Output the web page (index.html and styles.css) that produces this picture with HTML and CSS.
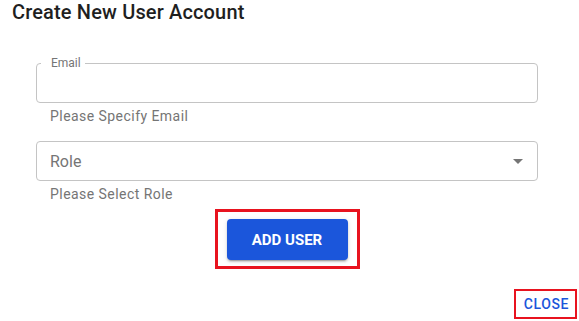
FILE: index.html
```html
<!DOCTYPE html>
<html lang="en">
<head>
  <title>Create New User Account</title>
  <meta charset="utf-8">
  <meta name="viewport" content="width=device-width, initial-scale=1">
  <link rel="stylesheet" href="styles.css">
</head>
<body>
  <div class="dialog">
    <h2 class="dialog-title">Create New User Account</h2>
    <form class="form">
      <div class="field">
        <div class="outline">
          <label class="floating-label" for="email">Email</label>
          <input class="input" id="email" type="email">
        </div>
        <p class="helper">Please Specify Email</p>
      </div>
      <div class="field">
        <div class="outline outline-select">
          <span class="placeholder">Role</span>
          <svg class="arrow" width="24" height="24" viewBox="0 0 24 24"><path d="M7 10l5 5 5-5z" fill="#757575"/></svg>
        </div>
        <p class="helper">Please Select Role</p>
      </div>
      <div class="form-actions">
        <div class="highlight">
          <button class="button button-blue" type="button">Add User</button>
        </div>
      </div>
    </form>
    <div class="dialog-footer">
      <div class="highlight highlight-thin">
        <button class="text-button" type="button">Close</button>
      </div>
    </div>
  </div>
</body>
</html>
```

FILE: styles.css
```css
*, *::before, *::after {
  margin: 0;
  padding: 0;
  box-sizing: border-box;
}

body {
  background-color: #FFFFFF;
  color: #212121;
  font-family: "Roboto", sans-serif;
}

.dialog {
  width: 579px;
  height: 321px;
  display: flex;
  flex-direction: column;
}

.dialog-title {
  padding: 1px 12px 0;
  font-size: 20px;
  font-weight: 500;
  line-height: 23px;
  letter-spacing: 0.15px;
  color: #1F1F1F;
}

.form {
  padding: 39px 0 0 36px;
  width: 538px;
}

.field + .field {
  margin-top: 15px;
}

.outline {
  position: relative;
  height: 40px;
  border: 1px solid #C4C4C4;
  border-radius: 4px;
  display: flex;
  align-items: center;
}

.floating-label {
  position: absolute;
  left: 4px;
  top: -8px;
  padding: 0 4px 0 10px;
  background-color: #FFFFFF;
  color: #757575;
  font-size: 12px;
  line-height: 14px;
}

.input {
  width: 100%;
  height: 100%;
  border: none;
  outline: none;
  background: transparent;
  padding: 0 13px;
  font-family: inherit;
  font-size: 16px;
}

.outline-select {
  justify-content: space-between;
  padding: 0 7px 0 13px;
}

.placeholder {
  color: #757575;
  font-size: 16px;
}

.arrow {
  display: block;
}

.helper {
  margin: 3px 0 0 14px;
  color: #757575;
  font-size: 14px;
  line-height: 20px;
  letter-spacing: 0.45px;
}

.form-actions {
  display: flex;
  justify-content: center;
  margin-top: 5px;
}

.highlight {
  border: 3px solid #E8131F;
  padding: 7px 9px 6px;
}

.button {
  display: block;
  border: none;
  border-radius: 4px;
  font-family: inherit;
  cursor: pointer;
}

.button-blue {
  width: 121px;
  height: 41px;
  background-color: #1B56DB;
  color: #FFFFFF;
  font-size: 15px;
  font-weight: 700;
  text-transform: uppercase;
  box-shadow: 0 3px 1px -2px rgba(0, 0, 0, 0.2), 0 2px 2px 0 rgba(0, 0, 0, 0.14), 0 1px 5px 0 rgba(0, 0, 0, 0.12);
}

.dialog-footer {
  margin-top: auto;
  display: flex;
  justify-content: flex-end;
  padding: 0 2px 2px 0;
}

.highlight-thin {
  border-width: 2px;
  padding: 0;
}

.text-button {
  display: block;
  width: 59px;
  height: 26px;
  padding-left: 2px;
  border: none;
  background: none;
  color: #1B56DB;
  font-family: inherit;
  font-size: 14px;
  font-weight: 500;
  letter-spacing: 0.6px;
  text-transform: uppercase;
  cursor: pointer;
}
```
